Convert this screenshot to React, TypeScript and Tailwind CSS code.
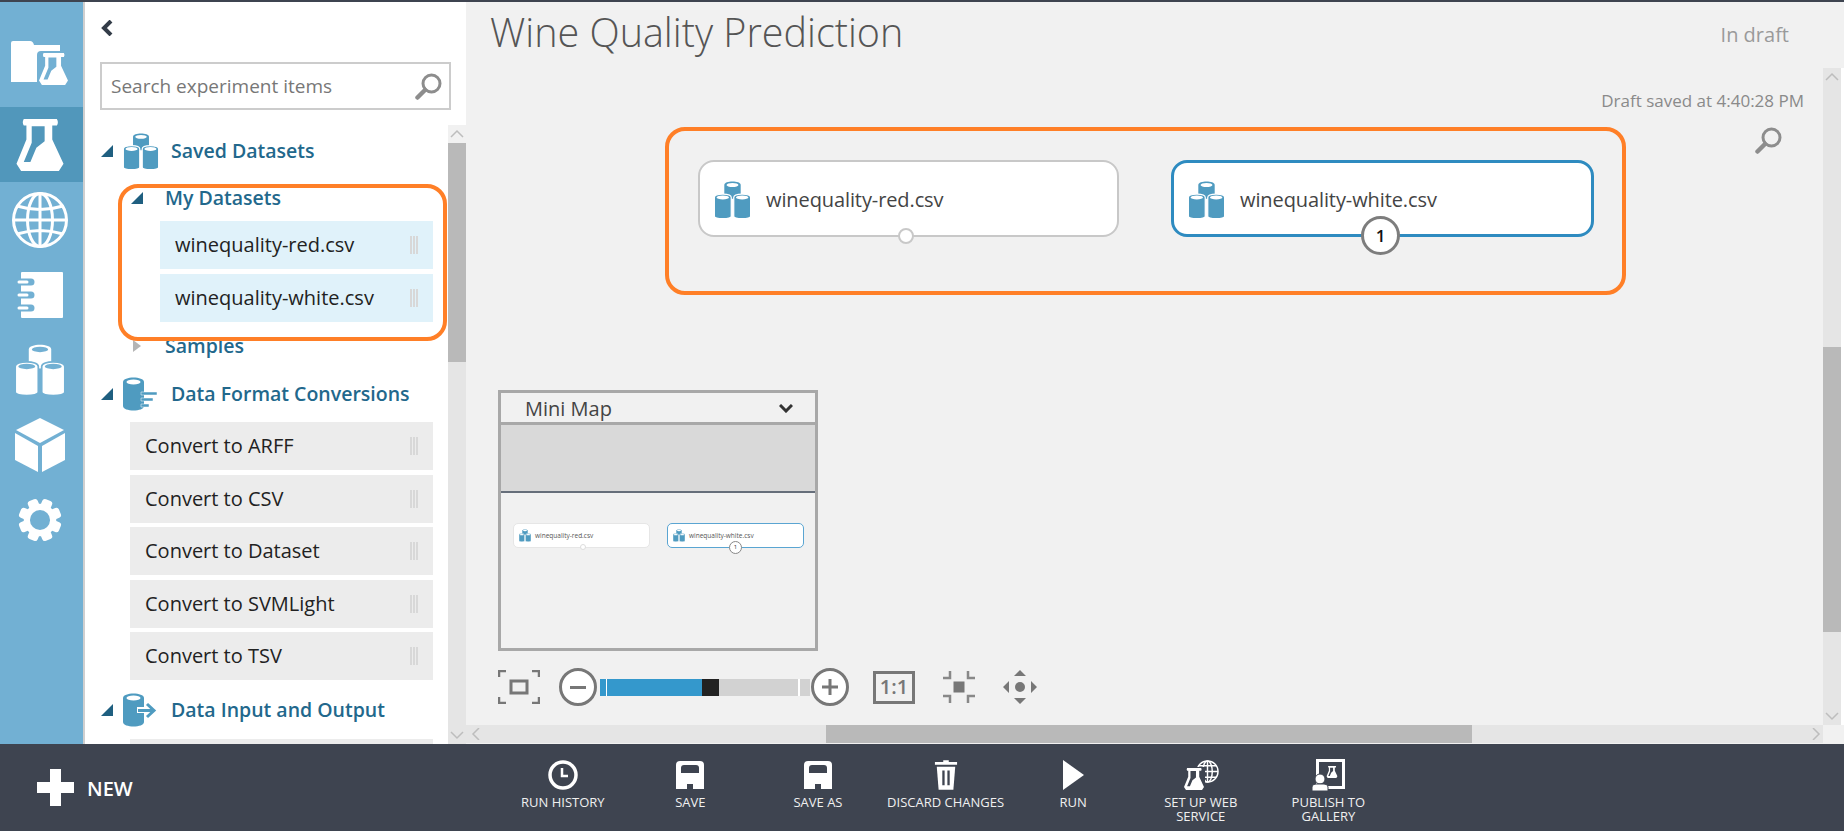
import type { ReactNode } from 'react';

const RAIL = '#72b0d3';
const RAIL_ACTIVE = '#5197bb';
const TEAL = '#4f9bc0';

function Cylinders({ className, fill = 'white', hole = RAIL, gap = RAIL }: { className?: string; fill?: string; hole?: string; gap?: string }) {
  const cyl = (x: number, y: number, w: number, h: number, stroke: boolean) => (
    <g>
      <path
        d={`M${x} ${y + 14} C${x} ${y - 4} ${x + w} ${y - 4} ${x + w} ${y + 14} V${y + h - 10} C${x + w} ${y + h + 3} ${x} ${y + h + 3} ${x} ${y + h - 10} Z`}
        fill={fill}
        stroke={stroke ? gap : 'none'}
        strokeWidth={stroke ? 5 : 0}
      />
      <ellipse cx={x + w / 2} cy={y + 14} rx={w / 2 - 9} ry={8} fill={hole} />
    </g>
  );
  return (
    <svg viewBox="0 0 146 153" className={className}>
      {cyl(40, 2, 66, 70, false)}
      {cyl(0, 52, 68, 100, true)}
      {cyl(78, 52, 68, 100, true)}
    </svg>
  );
}

function Flask({ className, hole = RAIL }: { className?: string; hole?: string }) {
  return (
    <svg viewBox="0 0 142 157" className={className}>
      <path
        d="M22 0 H122 Q128 10 122 20 H108 V62 L142 135 L128 157 H14 L0 135 L30 62 V20 H22 Q16 10 22 0 Z"
        fill="white"
      />
      <path d="M46 22 H85 V67 L60 87 L42 130 H22 L46 72 Z" fill={hole} />
    </svg>
  );
}

function FolderFlask() {
  return (
    <div className="relative h-[46px] w-[60px]">
      <svg viewBox="0 0 60 46" className="h-full w-full">
        <path d="M1 2 Q1 0 3 0 H20 Q23 0 24 4 H50 V41 H1 Z" fill="white" />
      </svg>
      <div className="absolute bottom-0 right-0 rounded-sm bg-[#72b0d3] p-[2px]">
        <Flask className="h-[32px] w-[29px]" />
      </div>
    </div>
  );
}

function Globe() {
  return (
    <svg viewBox="0 0 58 58" className="h-[58px] w-[58px]" fill="none" stroke="white" strokeWidth="3">
      <circle cx="29" cy="29" r="26.5" />
      <ellipse cx="29" cy="29" rx="12.5" ry="26.5" />
      <path d="M29 2 V56 M2.5 29 H55.5 M6 15 Q29 22 52 15 M6 43 Q29 36 52 43" />
    </svg>
  );
}

function Notebook() {
  return (
    <svg viewBox="0 0 46 46" className="h-[46px] w-[46px]" fill="none">
      <rect x="4" y="0" width="42" height="46" rx="1" fill="white" />
      <g stroke={RAIL} strokeWidth="7" strokeLinecap="round">
        <path d="M2 10 H14 M2 23 H14 M2 36 H14" />
      </g>
      <g stroke="white" strokeWidth="3" strokeLinecap="round">
        <path d="M2 10 H10 M2 23 H10 M2 36 H10" />
      </g>
    </svg>
  );
}

function Cube() {
  return (
    <svg viewBox="0 0 50 54" className="h-[54px] w-[50px]" fill="white">
      <path d="M25 0 L49 12 L25 25 L1 12 Z" />
      <path d="M0 15 L23 28 V54 L0 42 Z" />
      <path d="M50 15 L27 28 V54 L50 42 Z" />
    </svg>
  );
}

function Gear() {
  const teeth = [0, 45, 90, 135, 180, 225, 270, 315];
  return (
    <svg viewBox="0 0 46 46" className="h-[44px] w-[44px]">
      {teeth.map((a) => (
        <rect key={a} x="17.5" y="0.5" width="11" height="12" rx="3" fill="white" transform={`rotate(${a + 22.5} 23 23)`} />
      ))}
      <circle cx="23" cy="23" r="17" fill="white" />
      <circle cx="23" cy="23" r="10.5" fill={RAIL} />
    </svg>
  );
}

function Magnifier({ className, color }: { className?: string; color: string }) {
  return (
    <svg viewBox="0 0 27 27" className={className} fill="none" stroke={color}>
      <circle cx="16.5" cy="10.5" r="8.5" strokeWidth="3" />
      <path d="M10 17 L2.5 24.5" strokeWidth="4.5" strokeLinecap="round" />
    </svg>
  );
}

function RailSlot({ children, active, first }: { children: ReactNode; active?: boolean; first?: boolean }) {
  return (
    <div className={`flex h-[75px] items-center justify-center pr-[3px] ${first ? 'pb-3' : ''} ${active ? 'bg-[#5197bb]' : ''}`}>
      {children}
    </div>
  );
}

function Caret() {
  return (
    <svg viewBox="0 0 12 12" className="h-[12px] w-[12px] shrink-0">
      <path d="M12 0 V12 H0 Z" fill="#1f5f80" />
    </svg>
  );
}

function GroupHeader({ icon, label }: { icon: ReactNode; label: string }) {
  return (
    <div className="flex h-[52px] items-center">
      <Caret />
      <div className="ml-[10px] flex w-[48px] shrink-0 items-center">{icon}</div>
      <span className="text-[19.5px] font-semibold whitespace-nowrap text-[#22688c]">{label}</span>
    </div>
  );
}

function SubHeader({ label, open }: { label: string; open?: boolean }) {
  return (
    <div className="flex h-[42px] items-center pl-[30px]">
      {open ? (
        <Caret />
      ) : (
        <svg viewBox="0 0 8 12" className="ml-[2px] mr-[2px] h-[12px] w-[8px] shrink-0">
          <path d="M0 0 L8 6 L0 12 Z" fill="#b5b5b5" />
        </svg>
      )}
      <span className="ml-[22px] text-[19.5px] font-semibold text-[#22688c]">{label}</span>
    </div>
  );
}

function Grip() {
  return (
    <div className="flex h-[18px] gap-[1px]">
      <div className="w-[2px] bg-[#d8d8d8]" />
      <div className="w-[2px] bg-[#d8d8d8]" />
      <div className="w-[2px] bg-[#d8d8d8]" />
    </div>
  );
}

function PaletteItem({ label, selected }: { label: string; selected?: boolean }) {
  return (
    <div
      className={`flex h-[48px] items-center justify-between pl-[15px] pr-[15px] text-[20px] text-[#222] ${
        selected ? 'bg-[#e0f2fa]' : 'bg-[#ececec]'
      }`}
    >
      <span>{label}</span>
      <Grip />
    </div>
  );
}

function ScrollArrow({ dir }: { dir: 'up' | 'down' | 'left' | 'right' }) {
  const d = {
    up: 'M2 9 L8 3 L14 9',
    down: 'M2 3 L8 9 L14 3',
    left: 'M10 0 L4 6 L10 12',
    right: 'M4 0 L10 6 L4 12',
  }[dir];
  return (
    <svg viewBox={dir === 'up' || dir === 'down' ? '0 0 16 12' : '0 0 14 12'} className={dir === 'up' || dir === 'down' ? 'h-[12px] w-[16px]' : 'h-[12px] w-[14px]'} fill="none" stroke="#bdbdbd" strokeWidth="1.5">
      <path d={d} />
    </svg>
  );
}

function CanvasModule({ label, selected, className }: { label: string; selected?: boolean; className: string }) {
  return (
    <div
      className={`absolute flex h-[77px] items-center rounded-[16px] bg-white pl-[14px] pt-[2px] ${
        selected ? 'w-[423px] border-[3px] border-[#2e8bc0]' : 'w-[421px] border-2 border-[#c8c8c8]'
      } ${className}`}
    >
      <Cylinders className="h-[38px] w-[37px]" fill={TEAL} hole="white" gap="white" />
      <span className="ml-[15px] text-[20px] tracking-[-0.1px] text-[#444]">{label}</span>
      {selected ? (
        <div className="absolute -bottom-[21px] left-[187px] flex h-[39px] w-[39px] items-center justify-center rounded-full border-[3px] border-[#7d7d7d] bg-white text-[17px] font-semibold text-[#111]">
          1
        </div>
      ) : (
        <div className="absolute -bottom-[9px] left-[198px] h-[16px] w-[16px] rounded-full border-2 border-[#c8c8c8] bg-white" />
      )}
    </div>
  );
}

function MiniModule({ label, selected, className }: { label: string; selected?: boolean; className: string }) {
  return (
    <div
      className={`absolute flex h-[25px] w-[137px] items-center rounded-[5px] bg-white pl-[5px] ${
        selected ? 'border border-[#5aa5d2]' : 'border border-[#e6e6e6]'
      } ${className}`}
    >
      <Cylinders className="h-[13px] w-[12px]" fill={TEAL} hole="white" gap="white" />
      <span className="ml-[4px] text-[6.5px] text-[#555]">{label}</span>
      {selected ? (
        <div className="absolute -bottom-[7px] left-[61px] flex h-[13px] w-[13px] items-center justify-center rounded-full border border-[#888] bg-white text-[6px] text-[#333]">
          1
        </div>
      ) : (
        <div className="absolute -bottom-[3px] left-[66px] h-[6px] w-[6px] rounded-full border border-[#ddd] bg-white" />
      )}
    </div>
  );
}

function ZoomControls() {
  return (
    <div className="absolute left-[32px] top-[600px] flex h-[38px] items-center">
      <svg viewBox="0 0 42 34" className="h-[34px] w-[42px]" fill="none" stroke="#777" strokeWidth="2.5">
        <path d="M1 7 V1 H8 M34 1 H41 V7 M41 27 V33 H34 M8 33 H1 V27" />
        <rect x="13" y="11" width="16" height="12" strokeWidth="3" />
      </svg>
      <div className="z-10 ml-[19px] flex h-[38px] w-[38px] items-center justify-center rounded-full border-[3px] border-[#777] bg-white">
        <div className="h-[3px] w-[16px] bg-[#777]" />
      </div>
      <div className="ml-[3px] flex h-[17px] w-[210px]">
        <div className="h-full w-[6px] bg-[#3498cc]" />
        <div className="h-full w-[1px] bg-white" />
        <div className="h-full w-[95px] bg-[#3498cc]" />
        <div className="h-full w-[17px] bg-[#222]" />
        <div className="h-full w-[79px] bg-[#d2d2d2]" />
        <div className="h-full w-[2px] bg-white" />
        <div className="h-full w-[10px] bg-[#d2d2d2]" />
      </div>
      <div className="z-10 ml-[1px] flex h-[38px] w-[38px] items-center justify-center rounded-full border-[3px] border-[#777] bg-white">
        <svg viewBox="0 0 16 16" className="h-[16px] w-[16px]" stroke="#777" strokeWidth="3">
          <path d="M0 8 H16 M8 0 V16" />
        </svg>
      </div>
      <div className="ml-[24px] flex h-[33px] w-[42px] items-center justify-center border-[3px] border-[#777] text-[20px] font-semibold text-[#777]">
        1:1
      </div>
      <svg viewBox="0 0 34 34" className="ml-[27px] h-[34px] w-[34px]" fill="none" stroke="#888" strokeWidth="2.5">
        <path d="M1 8 H8 V1 M26 1 V8 H33 M33 26 H26 V33 M8 33 V26 H1" />
        <rect x="11.5" y="11.5" width="11" height="11" fill="#777" stroke="none" />
      </svg>
      <svg viewBox="0 0 34 34" className="ml-[27px] h-[34px] w-[34px]" fill="#777">
        <circle cx="17" cy="17" r="5" />
        <path d="M17 0 L23 6 H11 Z M17 34 L23 28 H11 Z M0 17 L6 11 V23 Z M34 17 L28 11 V23 Z" />
      </svg>
    </div>
  );
}

function Floppy() {
  return (
    <svg viewBox="0 0 28 28" className="h-[28px] w-[28px]">
      <path d="M4 0 H24 Q28 0 28 4 V28 H0 V4 Q0 0 4 0 Z" fill="white" />
      <path d="M8 4 H20 Q23 4 23 7 V12 H5 V7 Q5 4 8 4 Z" fill="#3e4450" />
      <path d="M11 23 H17 V28 H11 Z" fill="#3e4450" />
    </svg>
  );
}

function BarItem({ icon, label }: { icon: ReactNode; label: ReactNode }) {
  return (
    <div className="flex w-[127.6px] flex-col items-center pt-[15px]">
      <div className="flex h-[32px] items-center justify-center">{icon}</div>
      <div className="mt-[4px] text-center text-[13px] leading-[14px] whitespace-nowrap text-[#f0f0f0]">{label}</div>
    </div>
  );
}

const conversions = ['Convert to ARFF', 'Convert to CSV', 'Convert to Dataset', 'Convert to SVMLight', 'Convert to TSV'];

export default function App() {
  return (
    <div className="flex h-[831px] w-[1844px] flex-col overflow-hidden bg-[#f1f1f1] font-['Open_Sans',sans-serif]">
      <div className="h-[2px] bg-[#3e4450]" />
      <div className="flex h-[742px]">
        {/* left rail */}
        <div className="flex w-[85px] shrink-0 flex-col border-r-2 border-[#cfcfcf] bg-[#72b0d3] pt-[30px]">
          <RailSlot first>
            <FolderFlask />
          </RailSlot>
          <RailSlot active>
            <Flask className="h-[52px] w-[48px]" hole={RAIL_ACTIVE} />
          </RailSlot>
          <RailSlot>
            <Globe />
          </RailSlot>
          <RailSlot>
            <Notebook />
          </RailSlot>
          <RailSlot>
            <Cylinders className="h-[52px] w-[50px]" />
          </RailSlot>
          <RailSlot>
            <Cube />
          </RailSlot>
          <RailSlot>
            <Gear />
          </RailSlot>
        </div>

        {/* palette */}
        <div className="relative flex w-[381px] shrink-0 flex-col bg-white">
          <div className="flex h-[60px] items-start pl-[16px] pt-[18px]">
            <svg viewBox="0 0 12 16" className="h-[16px] w-[12px]" fill="none" stroke="#333c48" strokeWidth="4">
              <path d="M10 1 L3 8 L10 15" />
            </svg>
          </div>
          <div className="ml-[15px] flex h-[48px] w-[351px] items-center justify-between border-2 border-[#cccccc] pl-[9px] pr-[7px]">
            <span className="text-[19px] text-[#777]">Search experiment items</span>
            <Magnifier className="h-[27px] w-[27px]" color="#8d8d8d" />
          </div>
          <div className="mt-[15px] flex min-h-0 flex-1">
            <div className="w-[363px] overflow-hidden pl-[16px] pr-[15px]">
              <GroupHeader icon={<Cylinders className="h-[37px] w-[36px]" fill={TEAL} hole="white" gap="white" />} label="Saved Datasets" />
              <SubHeader label="My Datasets" open />
              <div className="ml-[59px] mt-[2px] flex flex-col gap-[5px]">
                <PaletteItem label="winequality-red.csv" selected />
                <PaletteItem label="winequality-white.csv" selected />
              </div>
              <div className="mt-[3px]">
                <SubHeader label="Samples" />
              </div>
              <div className="mt-[1px]">
                <GroupHeader
                  icon={
                    <svg viewBox="0 0 34 34" className="h-[34px] w-[34px]" fill={TEAL}>
                      <path d="M0 5 C0 -1 21 -1 21 5 V29 C21 35 0 35 0 29 Z" />
                      <ellipse cx="10.5" cy="5" rx="7" ry="2.5" fill="white" />
                      <path d="M18 15 H34 V18 H18 Z M18 21 H30 V24 H18 Z M18 27 H26 V30 H18 Z" stroke="white" strokeWidth="0.5" />
                    </svg>
                  }
                  label="Data Format Conversions"
                />
              </div>
              <div className="ml-[29px] mt-[2px] flex flex-col gap-[4.5px]">
                {conversions.map((c) => (
                  <PaletteItem key={c} label={c} />
                ))}
              </div>
              <div className="mt-[4px]">
                <GroupHeader
                  icon={
                    <svg viewBox="0 0 35 34" className="h-[34px] w-[35px]" fill={TEAL}>
                      <path d="M0 5 C0 -1 21 -1 21 5 V29 C21 35 0 35 0 29 Z" />
                      <ellipse cx="10.5" cy="5" rx="7" ry="2.5" fill="white" />
                      <path d="M14 17 H28 M24 10 L32 17.5 L24 25" fill="none" stroke="white" strokeWidth="6" />
                      <path d="M15 17.5 H30 M24 11 L31 17.5 L24 24" fill="none" stroke={TEAL} strokeWidth="3" />
                    </svg>
                  }
                  label="Data Input and Output"
                />
              </div>
              <div className="ml-[29px] mt-[3px] h-[48px] bg-[#ececec]" />
            </div>
            <div className="flex w-[18px] flex-col items-center bg-[#e5e5e5]">
              <div className="flex h-[18px] w-full items-center justify-center bg-[#f1f1f1]">
                <ScrollArrow dir="up" />
              </div>
              <div className="h-[219px] w-full bg-[#b9b9b9]" />
              <div className="flex-1" />
              <div className="flex h-[18px] items-center justify-center">
                <ScrollArrow dir="down" />
              </div>
            </div>
          </div>
          <div className="absolute left-[33px] top-[182px] h-[157px] w-[329px] rounded-[20px] border-[4px] border-[#ff7f27]" />
        </div>

        {/* canvas */}
        <div className="flex min-w-0 flex-1 flex-col">
          <div className="flex h-[66px] items-start justify-between pl-[24px] pr-[55px]">
            <span className="text-[39.5px] leading-[60px] font-light text-[#555]">Wine Quality Prediction</span>
            <span className="pt-[20px] text-[20px] leading-[26px] text-[#9a9a9a]">In draft</span>
          </div>
          <div className="flex min-h-0 flex-1">
            <div className="relative min-w-0 flex-1 overflow-hidden">
              <div className="flex justify-end pr-[19px] pt-[22px] text-[17px] leading-[22px] text-[#8a8a8a]">Draft saved at 4:40:28 PM</div>
              <Magnifier className="absolute left-[1289px] top-[59px] h-[27px] w-[27px]" color="#8d8d8d" />
              <CanvasModule label="winequality-red.csv" className="left-[232px] top-[92px]" />
              <CanvasModule label="winequality-white.csv" selected className="left-[705px] top-[92px]" />
              <div className="absolute left-[199px] top-[59px] h-[168px] w-[961px] rounded-[20px] border-[4px] border-[#ff7f27]" />

              <div className="absolute left-[32px] top-[322px] flex h-[261px] w-[320px] flex-col border-[3px] border-[#a8a8a8]">
                <div className="flex h-[32px] items-center justify-between border-b-[3px] border-[#a8a8a8] pl-[24px] pr-[22px] pt-[2px] text-[20px] text-[#444]">
                  <span>Mini Map</span>
                  <svg viewBox="0 0 14 9" className="h-[9px] w-[14px]" fill="none" stroke="#333" strokeWidth="3">
                    <path d="M1 1 L7 7 L13 1" />
                  </svg>
                </div>
                <div className="h-[68px] border-b-2 border-[#666e7a] bg-[#d9d9d9]" />
              </div>
              <MiniModule label="winequality-red.csv" className="left-[47px] top-[455px]" />
              <MiniModule label="winequality-white.csv" selected className="left-[201px] top-[455px]" />
              <ZoomControls />
            </div>
            <div className="flex w-[18px] flex-col items-center bg-[#e5e5e5]">
              <div className="flex h-[18px] items-center justify-center">
                <ScrollArrow dir="up" />
              </div>
              <div className="mt-[261px] h-[285px] w-full bg-[#b9b9b9]" />
              <div className="flex-1" />
              <div className="flex h-[18px] items-center justify-center">
                <ScrollArrow dir="down" />
              </div>
            </div>
            <div className="w-[3px] bg-white" />
          </div>
          <div className="flex h-[19px] pb-[1px]">
            <div className="flex h-[18px] w-[1357px] items-center bg-[#e5e5e5] pl-[3px]">
              <ScrollArrow dir="left" />
              <div className="ml-[343px] h-full w-[646px] bg-[#b9b9b9]" />
              <div className="flex-1" />
              <ScrollArrow dir="right" />
            </div>
          </div>
        </div>
      </div>

      {/* bottom bar */}
      <div className="flex h-[87px] bg-[#3e4450]">
        <div className="flex w-[499px] shrink-0 items-center pl-[37px]">
          <svg viewBox="0 0 37 37" className="h-[37px] w-[37px]" fill="white">
            <path d="M13 0 H24 V13 H37 V24 H24 V37 H13 V24 H0 V13 H13 Z" />
          </svg>
          <span className="ml-[13px] pt-[3px] text-[20px] font-semibold text-white">NEW</span>
        </div>
        <BarItem
          label="RUN HISTORY"
          icon={
            <svg viewBox="0 0 30 30" className="h-[30px] w-[30px]" fill="none" stroke="white">
              <circle cx="15" cy="15" r="13" strokeWidth="3.5" />
              <path d="M14 8 V16 H20" strokeWidth="2.5" />
            </svg>
          }
        />
        <BarItem label="SAVE" icon={<Floppy />} />
        <BarItem label="SAVE AS" icon={<Floppy />} />
        <BarItem
          label="DISCARD CHANGES"
          icon={
            <svg viewBox="0 0 26 32" className="h-[30px] w-[24px]" fill="white">
              <path d="M10 0 H16 V2 H25 V5 H1 V2 H10 Z" />
              <path d="M3 7 H23 L21 32 H5 Z" />
              <path d="M9 11 H11.5 V27 H9 Z M14.5 11 H17 V27 H14.5 Z" fill="#3e4450" />
            </svg>
          }
        />
        <BarItem
          label="RUN"
          icon={
            <svg viewBox="0 0 21 30" className="h-[30px] w-[21px]" fill="white">
              <path d="M0 0 L21 15 L0 30 Z" />
            </svg>
          }
        />
        <BarItem
          label={
            <>
              SET UP WEB
              <br />
              SERVICE
            </>
          }
          icon={
            <div className="relative h-[32px] w-[36px]">
              <svg viewBox="0 0 24 28" className="absolute right-0 top-0 h-[27px] w-[23px]" fill="none" stroke="white" strokeWidth="1.5">
                <circle cx="12" cy="13" r="11" />
                <ellipse cx="12" cy="13" rx="5" ry="11" />
                <path d="M12 2 V24 M1 13 H23 M3 7 H21 M3 19 H21" />
              </svg>
              <div className="absolute bottom-0 left-0 bg-[#3e4450] px-[1px]">
                <Flask className="h-[24px] w-[20px]" hole="#3e4450" />
              </div>
            </div>
          }
        />
        <BarItem
          label={
            <>
              PUBLISH TO
              <br />
              GALLERY
            </>
          }
          icon={
            <div className="relative h-[32px] w-[34px]">
              <div className="absolute right-0 top-0 h-[30px] w-[29px] border-[3px] border-white" />
              <Flask className="absolute right-[7px] top-[7px] h-[12px] w-[12px]" hole="#3e4450" />
              <svg viewBox="0 0 18 18" className="absolute bottom-0 left-0 h-[18px] w-[18px]" fill="white" stroke="#3e4450" strokeWidth="1">
                <circle cx="9" cy="6" r="5" />
                <path d="M1 18 V14 Q1 11 5 11 H13 Q17 11 17 14 V18 Z" />
              </svg>
            </div>
          }
        />
      </div>
    </div>
  );
}
